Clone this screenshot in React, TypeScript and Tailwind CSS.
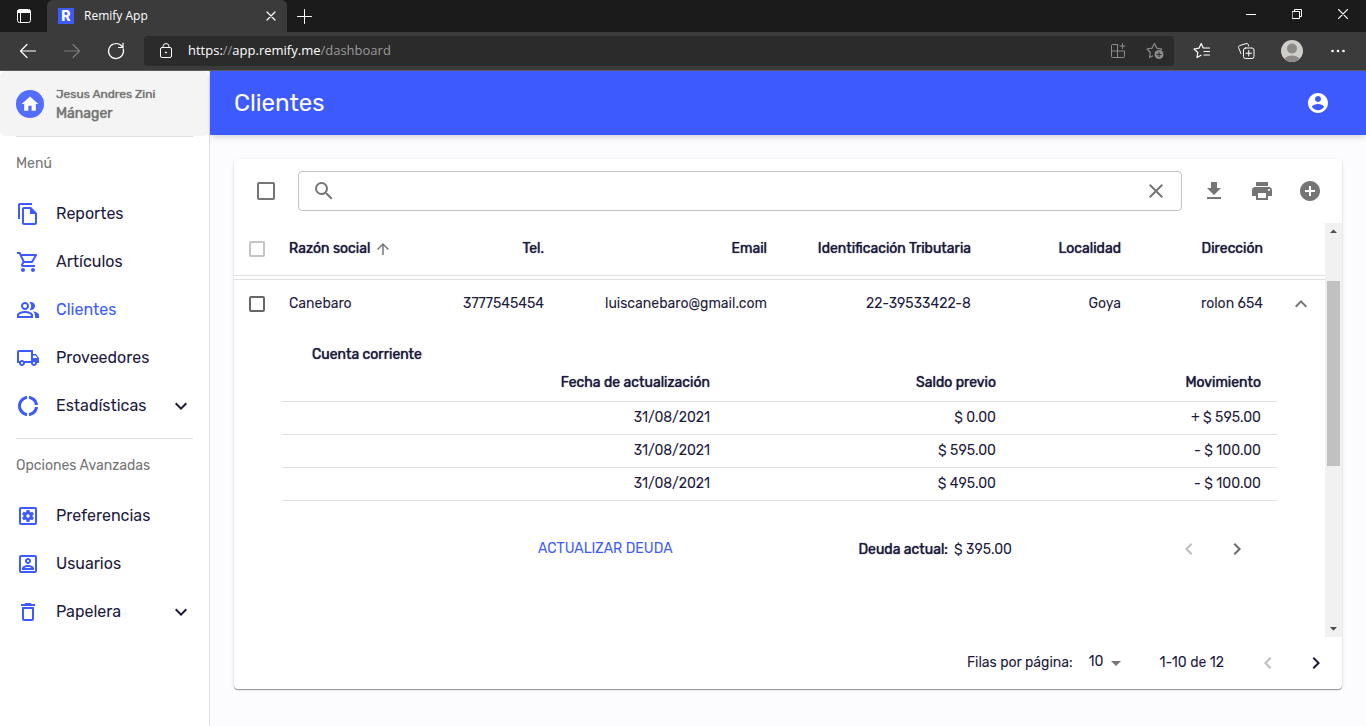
import React from "react";
import {
  MdOutlineFileCopy,
  MdOutlineShoppingCart,
  MdOutlinePeopleAlt,
  MdOutlineLocalShipping,
  MdDonutLarge,
  MdOutlineSettingsApplications,
  MdDeleteOutline,
  MdExpandMore,
  MdExpandLess,
  MdSearch,
  MdClose,
  MdFileDownload,
  MdPrint,
  MdAddCircle,
  MdArrowUpward,
  MdChevronLeft,
  MdChevronRight,
  MdArrowDropDown,
  MdArrowDropUp,
  MdHome,
} from "react-icons/md";

type IconProps = { size?: number; className?: string };
type Item = { label: string; icon: React.ComponentType<IconProps>; active?: boolean; expandable?: boolean };

function AccountBoxIcon({ size = 24, className }: IconProps) {
  return (
    <svg width={size} height={size} viewBox="0 0 24 24" fill="currentColor" className={className}>
      <path d="M19 5v14H5V5h14m0-2H5c-1.1 0-2 .9-2 2v14c0 1.1.9 2 2 2h14c1.1 0 2-.9 2-2V5c0-1.1-.9-2-2-2zm-7 9c-1.65 0-3-1.35-3-3s1.35-3 3-3 3 1.35 3 3-1.35 3-3 3zm0-4c-.55 0-1 .45-1 1s.45 1 1 1 1-.45 1-1-.45-1-1-1zm6 10H6v-1.53c0-2.5 3.97-3.58 6-3.58s6 1.08 6 3.58V18zm-9.69-2h7.38c-.69-.56-2.38-1.12-3.69-1.12s-3.01.56-3.69 1.12z" />
    </svg>
  );
}

const menu: Item[] = [
  { label: "Reportes", icon: MdOutlineFileCopy },
  { label: "Artículos", icon: MdOutlineShoppingCart },
  { label: "Clientes", icon: MdOutlinePeopleAlt, active: true },
  { label: "Proveedores", icon: MdOutlineLocalShipping },
  { label: "Estadísticas", icon: MdDonutLarge, expandable: true },
];

const advanced: Item[] = [
  { label: "Preferencias", icon: MdOutlineSettingsApplications },
  { label: "Usuarios", icon: AccountBoxIcon },
  { label: "Papelera", icon: MdDeleteOutline, expandable: true },
];

const movements = [
  ["31/08/2021", "$ 0.00", "+ $ 595.00"],
  ["31/08/2021", "$ 595.00", "- $ 100.00"],
  ["31/08/2021", "$ 495.00", "- $ 100.00"],
];

const strong = "font-normal [text-shadow:0_0_1px_currentColor]";

const stroke = { fill: "none", stroke: "currentColor", strokeLinecap: "round", strokeLinejoin: "round" } as const;

function TitleBar() {
  return (
    <div className="flex h-8 bg-[#1b1b1b] text-white">
      <button aria-label="Menú de pestañas" className="flex w-[47px] items-center justify-center">
        <svg width="16" height="16" viewBox="0 0 16 16" {...stroke}>
          <rect x="1.5" y="1.5" width="13" height="13" rx="2" />
          <path d="M2 2.5h12v2H2z" fill="currentColor" />
          <path d="M4.5 5v9" />
        </svg>
      </button>
      <div className="flex w-60 items-center rounded-t-md bg-[#3b3b3b] pr-2.5 pl-[11px]">
        <span className="flex size-4 items-center justify-center bg-[#3d5afe] font-[Inter,sans-serif] text-sm leading-4 font-extrabold">R</span>
        <span className="ml-2.5 flex-1 text-xs">Remify App</span>
        <button aria-label="Cerrar pestaña" className="flex size-3 items-center justify-center">
          <svg width="10" height="10" viewBox="0 0 10 10" {...stroke}>
            <path d="M1 1l8 8M9 1L1 9" strokeWidth="1.2" />
          </svg>
        </button>
      </div>
      <button aria-label="Nueva pestaña" className="flex w-[35px] items-center justify-center">
        <svg width="15" height="15" viewBox="0 0 15 15" {...stroke}>
          <path d="M7.5 .5v14M.5 7.5h14" />
        </svg>
      </button>
      <div className="ml-auto flex h-7">
        <button aria-label="Minimizar" className="flex w-[46px] items-center justify-center">
          <svg width="10" height="10" viewBox="0 0 10 10" {...stroke}>
            <path d="M0 5.5h10" />
          </svg>
        </button>
        <button aria-label="Restaurar" className="flex w-[46px] items-center justify-center">
          <svg width="10" height="10" viewBox="0 0 10 10" {...stroke}>
            <path d="M.5 2.5h7v7h-7zM2.5 2.5v-2h7v7h-2" />
          </svg>
        </button>
        <button aria-label="Cerrar" className="flex w-[46px] items-center justify-center">
          <svg width="10" height="10" viewBox="0 0 10 10" {...stroke}>
            <path d="M0 0l10 10M10 0L0 10" strokeWidth="1.2" />
          </svg>
        </button>
      </div>
    </div>
  );
}

function AddressBar() {
  return (
    <div className="flex h-[39px] items-center border-b border-[#5b5b5b] bg-[#3b3b3b] text-white">
      <button aria-label="Atrás" className="flex w-11 justify-center pl-3">
        <svg width="18" height="16" viewBox="0 0 18 16" {...stroke}>
          <path d="M16.5 8H1.5M8 1.5L1.5 8L8 14.5" strokeWidth="1.2" />
        </svg>
      </button>
      <button aria-label="Adelante" className="flex w-11 justify-center pl-3 text-[#7c7c7c]">
        <svg width="18" height="16" viewBox="0 0 18 16" {...stroke}>
          <path d="M1.5 8h15M10 1.5L16.5 8L10 14.5" strokeWidth="1.2" />
        </svg>
      </button>
      <button aria-label="Actualizar" className="flex w-11 justify-center pl-3">
        <svg width="18" height="18" viewBox="0 0 18 18" {...stroke}>
          <path d="M16.2 6.8A7.5 7.5 0 1 1 13.2 2.8L16 5.2M16 1.2V5.5H11.5" strokeWidth="1.2" />
        </svg>
      </button>
      <div className="ml-3 flex h-[30px] flex-1 items-center rounded bg-[#2b2b2b] pr-2.5 pl-3.5">
        <svg width="16" height="18" viewBox="0 0 16 18" {...stroke}>
          <rect x="2.5" y="5.5" width="11" height="10" rx="1.5" />
          <path d="M5 5.5V4.5a3 3 0 0 1 6 0v1" />
          <circle cx="8" cy="10.5" r=".6" fill="currentColor" />
        </svg>
        <p className="ml-3.5 flex-1 text-[13px] text-[#9a9a9a]">
          <span className="text-white">https:</span>//
          <span className="text-white">app.remify.me</span>/dashboard
        </p>
        <div className="flex items-center gap-5 text-[#8b8b8b]">
          <button aria-label="Instalar aplicación">
            <svg width="16" height="16" viewBox="0 0 16 16" {...stroke}>
              <path d="M7.5 1.5h-5a1 1 0 0 0-1 1v11a1 1 0 0 0 1 1h11a1 1 0 0 0 1-1v-5.5h-13M7.5 1.5v13M12.5 .5v5M10 3h5" />
            </svg>
          </button>
          <button aria-label="Agregar a favoritos">
            <svg width="18" height="18" viewBox="0 0 18 18" {...stroke}>
              <path d="M6.5 14L3.5 15.5l.8-5L1 7l5-.8L8.5 1.5l2.3 4.7 5 .8-1 1" strokeWidth="1.2" />
              <circle cx="13" cy="12.5" r="4.5" fill="currentColor" stroke="none" />
              <path d="M13 10.3v4.4M10.8 12.5h4.4" stroke="#2b2b2b" />
            </svg>
          </button>
        </div>
      </div>
      <div className="flex items-center pr-2 pl-1">
        <button aria-label="Favoritos" className="flex w-12 justify-center">
          <svg width="18" height="18" viewBox="0 0 18 18" {...stroke}>
            <path d="M8 13.2L4 15.5l.8-5L1 7l5-.8L8.2 1.5l2 4.5h6.3M11 9.5h5.5M11 13h5.5" strokeWidth="1.2" />
          </svg>
        </button>
        <button aria-label="Colecciones" className="flex w-10 justify-center">
          <svg width="18" height="18" viewBox="0 0 18 18" {...stroke}>
            <path d="M4 11.5L1.5 5.5a2 2 0 0 1 1.3-2L9 1.6a2 2 0 0 1 2.4 1.3l.3 1" />
            <rect x="6.5" y="6" width="10.5" height="10.5" rx="2" />
            <path d="M11.75 8.5v5.5M9 11.25h5.5" />
          </svg>
        </button>
        <button aria-label="Perfil" className="flex w-[52px] justify-center">
          <svg width="22" height="22" viewBox="0 0 22 22">
            <circle cx="11" cy="11" r="11" fill="#d0cecb" />
            <circle cx="11" cy="8.5" r="5" fill="#8d8986" />
            <path d="M3.5 19a8 5.5 0 0 1 15 0A11 11 0 0 1 3.5 19z" fill="#8d8986" />
          </svg>
        </button>
        <button aria-label="Más opciones" className="flex w-10 justify-center">
          <svg width="16" height="4" viewBox="0 0 16 4" fill="currentColor">
            <circle cx="2.5" cy="2" r="1.3" />
            <circle cx="8" cy="2" r="1.3" />
            <circle cx="13.5" cy="2" r="1.3" />
          </svg>
        </button>
      </div>
    </div>
  );
}

function MenuList({ items }: { items: Item[] }) {
  return (
    <ul>
      {items.map(({ label, icon: Icon, active, expandable }) => (
        <li key={label}>
          <a href="#" className={`flex h-12 items-center px-4 text-base ${active ? "text-[#3d5afe]" : "text-[#1d1a3d]"}`}>
            <Icon size={24} className="text-[#3d5afe]" />
            <span className="ml-4 flex-1">{label}</span>
            {expandable && <MdExpandMore size={24} />}
          </a>
        </li>
      ))}
    </ul>
  );
}

function MenuHeading({ children }: { children: string }) {
  return <h2 className="px-4 pt-[17px] pb-4 text-sm text-[#757575]">{children}</h2>;
}

function Sidebar() {
  return (
    <nav className="w-[210px] shrink-0 border-r border-[#dfdfe2] bg-white">
      <div className="flex h-[65px] items-center gap-3 rounded-md bg-[#f4f4f4] px-4 text-[#757575]">
        <span className="flex size-7 items-center justify-center rounded-full bg-[#536dfe] text-white">
          <MdHome size={20} />
        </span>
        <div className={strong}>
          <p className="text-xs leading-5">Jesus Andres Zini</p>
          <p className="text-sm leading-5">Mánager</p>
        </div>
      </div>
      <hr className="mx-4 border-[#dfdfdf]" />
      <MenuHeading>Menú</MenuHeading>
      <MenuList items={menu} />
      <hr className="mx-4 mt-2 border-[#dfdfdf]" />
      <MenuHeading>Opciones Avanzadas</MenuHeading>
      <MenuList items={advanced} />
    </nav>
  );
}

function Check({ label, tone, size = "size-4" }: { label: string; tone: string; size?: string }) {
  return (
    <input type="checkbox" aria-label={label} className={`block shrink-0 appearance-none rounded-xs border-2 bg-white ${size} ${tone}`} />
  );
}

function SearchBar() {
  return (
    <div className="flex h-16 items-center pr-5 pl-[23px]">
      <Check label="Seleccionar todos" tone="border-[#757575]" size="size-[18px]" />
      <label className="ml-[23px] flex h-10 flex-1 items-center rounded border border-[#c4c4c4] px-[13px] text-[#757575]">
        <MdSearch size={24} />
        <input type="text" aria-label="Buscar" className="mx-2 min-w-0 flex-1 text-base outline-none" />
        <button aria-label="Limpiar">
          <MdClose size={24} />
        </button>
      </label>
      <div className="ml-5 flex gap-6 text-[#757575]">
        <button aria-label="Descargar"><MdFileDownload size={24} /></button>
        <button aria-label="Imprimir"><MdPrint size={24} /></button>
        <button aria-label="Agregar"><MdAddCircle size={24} /></button>
      </div>
    </div>
  );
}

function Detail() {
  return (
    <div className="px-12 pt-4">
      <h3 className={`pl-[30px] text-sm leading-6 ${strong}`}>Cuenta corriente</h3>
      <table className="w-full table-fixed text-right text-sm">
        <colgroup>
          <col className="w-[444px]" />
          <col className="w-[286px]" />
          <col className="w-[265px]" />
        </colgroup>
        <thead>
          <tr className="h-[34px] border-b border-[#e0e0e0]">
            {["Fecha de actualización", "Saldo previo", "Movimiento"].map((h) => (
              <th key={h} className={`pr-4 pb-0.5 ${strong}`}>{h}</th>
            ))}
          </tr>
        </thead>
        <tbody>
          {movements.map((row, i) => (
            <tr key={i} className="h-[33px] border-b border-[#e0e0e0]">
              {row.map((c, j) => (
                <td key={j} className="pr-4">{c}</td>
              ))}
            </tr>
          ))}
        </tbody>
      </table>
      <div className="mt-6 mb-16 flex h-12 items-center pl-64 text-sm">
        <button className="text-[#3d5afe]">ACTUALIZAR DEUDA</button>
        <p className="ml-auto pt-0.5"><b className={`mr-1.5 ${strong}`}>Deuda actual:</b>$ 395.00</p>
        <div className="ml-[165px] flex gap-6 pr-7">
          <button aria-label="Movimientos anteriores" disabled className="text-[#bdbdbd]"><MdChevronLeft size={24} /></button>
          <button aria-label="Movimientos siguientes" className="text-[#6b6b6b]"><MdChevronRight size={24} /></button>
        </div>
      </div>
    </div>
  );
}

function ClientsTable() {
  return (
    <div className="flex">
      <div className="min-w-0 flex-1">
        <table className="w-full table-fixed text-right text-sm">
          <colgroup>
            <col className="w-[47px]" />
            <col className="w-[120px]" />
            <col className="w-[151px]" />
            <col className="w-[223px]" />
            <col className="w-[204px]" />
            <col className="w-[150px]" />
            <col className="w-[142px]" />
            <col className="w-[54px]" />
          </colgroup>
          <thead>
            <tr className="h-[52px] border-b border-[#e0e0e0]">
              <th className="pl-[15px]"><Check label="Seleccionar página" tone="border-[#c4c4c4]" /></th>
              <th className="px-2 text-left">
                <button className={`flex items-center gap-1 whitespace-nowrap ${strong}`}>
                  Razón social <MdArrowUpward size={18} className="text-[#757575]" />
                </button>
              </th>
              {["Tel.", "Email", "Identificación Tributaria", "Localidad", "Dirección"].map((h) => (
                <th key={h} className={`px-2 whitespace-nowrap ${strong}`}>{h}</th>
              ))}
              <th />
            </tr>
          </thead>
          <tbody>
            <tr className="h-1 border-b border-[#e0e0e0]"><td colSpan={8} /></tr>
            <tr className="h-12">
              <td className="pt-0.5 pl-[15px]"><Check label="Seleccionar Canebaro" tone="border-[#666666]" /></td>
              <td className="px-2 pt-0.5 text-left">Canebaro</td>
              {["3777545454", "luiscanebaro@gmail.com", "22-39533422-8", "Goya", "rolon 654"].map((c) => (
                <td key={c} className="px-2 pt-0.5">{c}</td>
              ))}
              <td className="pt-0.5">
                <button aria-label="Contraer" className="ml-[18px] flex text-[#757575]"><MdExpandLess size={24} /></button>
              </td>
            </tr>
            <tr>
              <td colSpan={8} className="text-left"><Detail /></td>
            </tr>
          </tbody>
        </table>
      </div>
      <div aria-hidden="true" className="flex w-[17px] shrink-0 flex-col items-center justify-between bg-[#f1f1f1] text-[#505050]">
        <MdArrowDropUp size={17} className="shrink-0" />
        <div className="mt-[41px] mb-auto h-[185px] w-[13px] bg-[#c1c1c1]" />
        <MdArrowDropDown size={17} className="shrink-0" />
      </div>
    </div>
  );
}

function Pagination() {
  return (
    <div className="flex h-[52px] items-center justify-end pr-3.5 text-sm">
      <label htmlFor="rows">Filas por página:</label>
      <div className="ml-4 flex items-center">
        <select id="rows" className="appearance-none pb-0.5 outline-none"><option>10</option></select>
        <MdArrowDropDown size={24} className="text-[#757575]" />
      </div>
      <span className="ml-8">1-10 de 12</span>
      <div className="ml-8 flex gap-6">
        <button aria-label="Página anterior" disabled className="text-[#bdbdbd]"><MdChevronLeft size={24} /></button>
        <button aria-label="Página siguiente"><MdChevronRight size={24} /></button>
      </div>
    </div>
  );
}

export default function App() {
  return (
    <div className="flex min-h-screen flex-col font-['Open_Sans',sans-serif]">
      <TitleBar />
      <AddressBar />
      <div className="flex flex-1 bg-[#fcfcff] font-[Rubik,Roboto,sans-serif] text-[#1d1a3d]">
        <Sidebar />
        <div className="min-w-0 flex-1">
          <header className="flex h-16 items-center justify-between bg-[#3d5afe] pr-9 pl-6 text-white shadow-md">
            <h1 className="text-2xl">Clientes</h1>
            <button aria-label="Cuenta">
              <svg width="24" height="24" viewBox="0 0 24 24" fill="currentColor">
                <path d="M12 2C6.48 2 2 6.48 2 12s4.48 10 10 10 10-4.48 10-10S17.52 2 12 2zm0 3c1.66 0 3 1.34 3 3s-1.34 3-3 3-3-1.34-3-3 1.34-3 3-3zm0 14.2c-2.5 0-4.71-1.28-6-3.22.03-1.99 4-3.08 6-3.08 1.99 0 5.97 1.09 6 3.08-1.29 1.94-3.5 3.22-6 3.22z" />
              </svg>
            </button>
          </header>
          <main className="p-6">
            <section className="rounded bg-white shadow-[0_1px_1px_rgba(0,0,0,0.4),0_1px_4px_rgba(0,0,0,0.08)]">
              <SearchBar />
              <ClientsTable />
              <Pagination />
            </section>
          </main>
        </div>
      </div>
    </div>
  );
}
